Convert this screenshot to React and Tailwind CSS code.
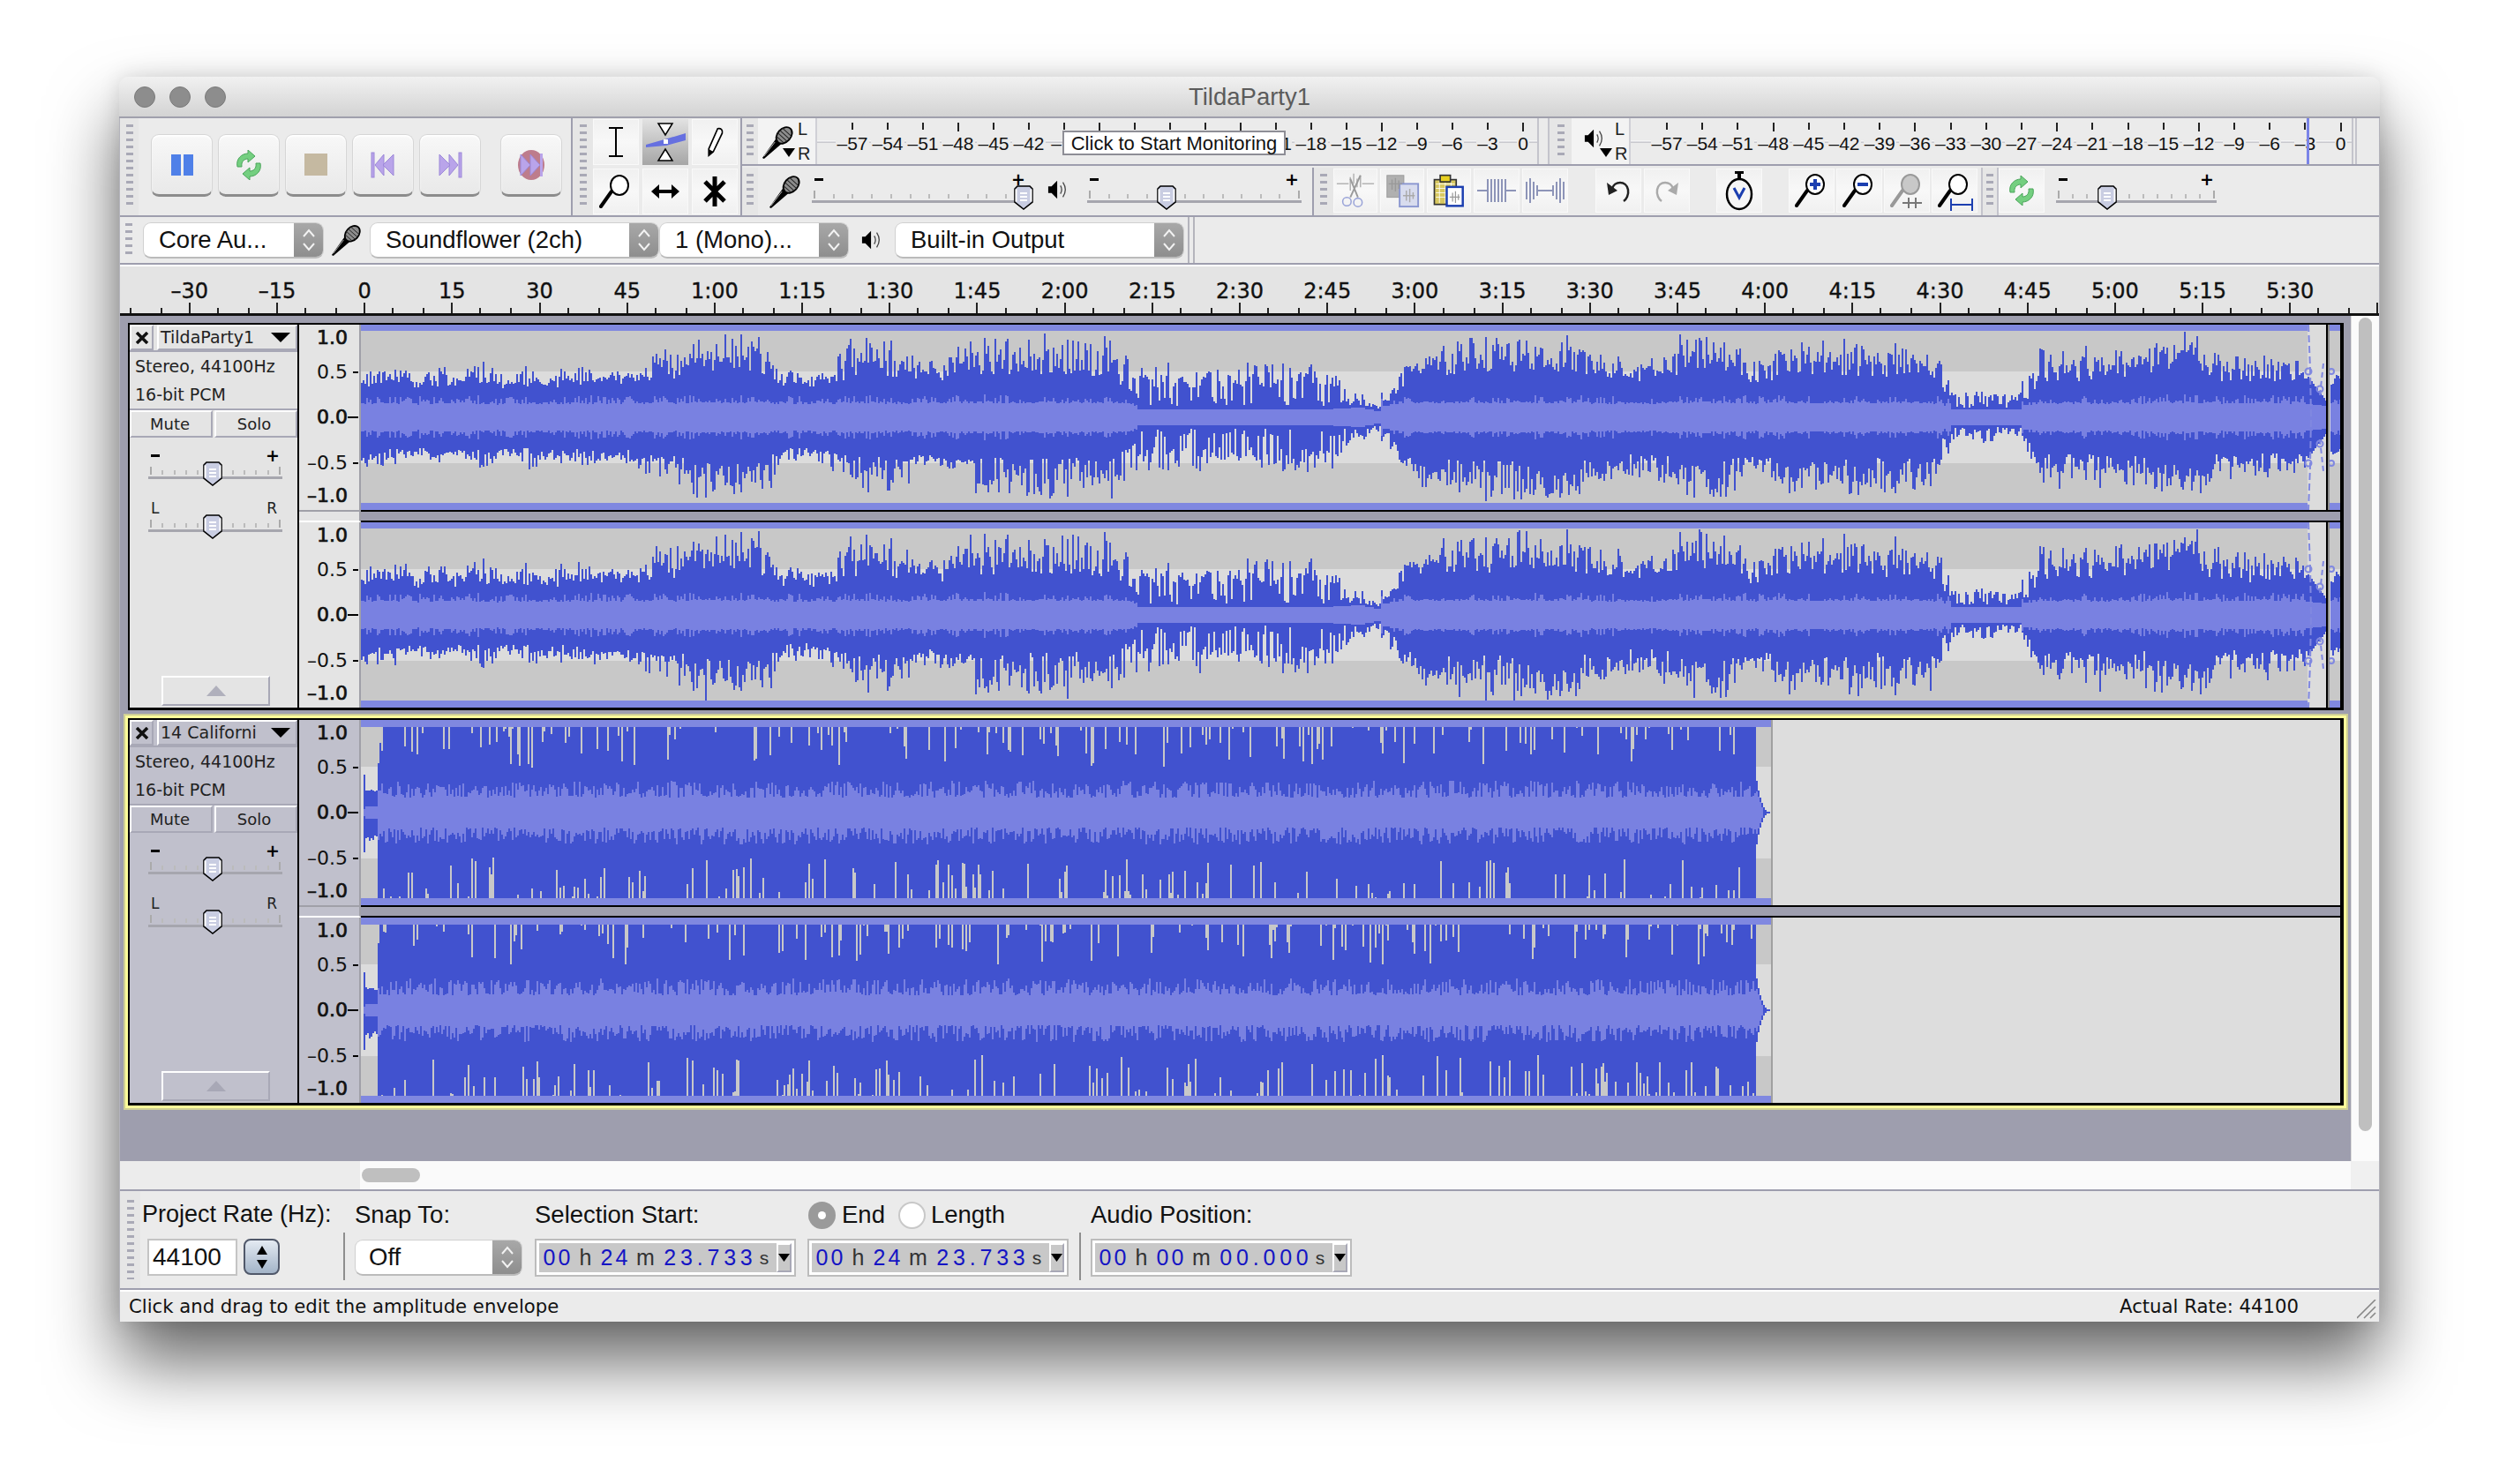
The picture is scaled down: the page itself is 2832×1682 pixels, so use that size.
import React from "react";

/* ---------- waveform data ---------- */
function mulberry(a) {
  return () => {
    a |= 0; a = (a + 0x6d2b79f5) | 0;
    let t = Math.imul(a ^ (a >>> 15), 1 | a);
    t = (t + Math.imul(t ^ (t >>> 7), 61 | t)) ^ t;
    return ((t ^ (t >>> 14)) >>> 0) / 4294967296;
  };
}
const T1 = [
  [409, 38, 60], [461, 36, 46], [490, 38, 80], [501, 37, 48], [537, 40, 68], [558, 36, 46], [592, 38, 83],
  [602, 37, 50], [645, 40, 66], [660, 40, 54], [731, 46, 78], [782, 54, 97], [875, 36, 54], [948, 48, 90],
  [1034, 44, 64], [1084, 50, 95], [1278, 13, 62, 1], [1520, 15, 28], [1556, 8, 12], [1575, 38, 54], [1600, 52, 95],
  [1680, 54, 95], [1795, 44, 76], [1890, 54, 97], [1966, 42, 68], [2015, 54, 97], [2060, 50, 90], [2200, 12, 30],
  [2300, 44, 82], [2440, 58, 97], [2500, 44, 72], [2615, 36, 40], [2636, 38, 50],
];
function seg(x) {
  let s = T1[0];
  for (const t of T1) if (x >= t[0]) s = t;
  return s;
}
function genT1() {
  const r = mulberry(11);
  const cols = [];
  let sT = 0.4, sB = 0.4;
  for (let x = 409; x < 2652; x += 2) {
    const a = seg(x - 10), c = seg(x), d = seg(x + 10);
    const f = (a[1] + c[1] + d[1]) / 3;
    const p = (a[2] + c[2] + d[2]) / 3;
    const comb = c[3];
    sT = 0.6 * sT + 0.4 * r();
    sB = 0.6 * sB + 0.4 * r();
    const one = (s) => {
      const base = f * (0.92 + r() * 0.16);
      if (comb) return r() < 0.72 ? 34 + Math.pow(r(), 1.4) * (p - 34) : base + r() * 10;
      if (r() < 0.05) return p * (0.85 + r() * 0.15);
      if (r() > 0.78) return base;
      const q = Math.min(1, s * 0.55 + r() * 0.62);
      return base + (p - base) * Math.pow(q, 1.6);
    };
    const t = one(sT);
    const b = one(sB);
    let rms = f < 20 ? Math.max(7, f * 0.72) : 11 + f * 0.09 + r() * 3;
    if (t > p * 0.8 && f >= 20) rms += r() * 8;
    cols.push({ x, t: Math.min(t, 97), b: Math.min(b, 97), rt: rms, rb: rms });
  }
  return cols;
}
function variant(cols, seed) {
  const r = mulberry(seed);
  return cols.map((c) => ({
    ...c,
    t: Math.min(97, c.t * (0.9 + r() * 0.2)),
    b: Math.min(97, c.b * (0.9 + r() * 0.2)),
  }));
}
function genT2(seed) {
  const r = mulberry(seed);
  const cols = [];
  cols.push({ x: 412, t: 43, b: 45, rt: 4, rb: 4 });
  for (let x = 414; x < 428; x += 2) {
    const a = 24 - (x - 414) * 0.1 + r() * 3;
    cols.push({ x, t: a, b: a + r() * 8, rt: 7, rb: 7 });
  }
  for (let x = 428; x < 1990; x += 2) {
    const t = r() < 0.2 ? 97 - Math.pow(r(), 1.3) * 46 : 97;
    const b = r() < 0.2 ? 97 - Math.pow(r(), 1.3) * 46 : 97;
    const rt = 17 + Math.pow(r(), 1.4) * 19;
    const rb = 17 + Math.pow(r(), 1.4) * 19;
    cols.push({ x, t, b, rt, rb });
  }
  for (let x = 1990; x < 2006; x += 2) {
    const k = (2006 - x) / 16;
    const a = Math.max(1, Math.pow(k, 2.6) * 36);
    const q = Math.max(0, (1998 - x) / 8) * 24;
    cols.push({ x, t: a, b: a, rt: q, rb: q });
  }
  return cols;
}
const pathOf = (cols, kT, kB) =>
  cols.map((c) => `M${c.x - 409} ${(105 - c[kT]).toFixed(0)}h2V${(105 + c[kB]).toFixed(0)}h-2z`).join("");

const T1A = genT1();
const T1B = variant(T1A, 5);
const T2A = genT2(21);
const T2B = genT2(22);

function Channel({ cols, kind }) {
  const dark = "#4152cf", light = "#7981e1", band = "#8088e0";
  const inPlay = cols.filter((c) => kind === 1 ? (c.x < 2615 || c.x >= 2640) : true);
  const tail = kind === 1 ? cols.filter((c) => c.x >= 2615 && c.x < 2636).map((c) => {
    const k = (c.x - 2615) / 21;
    return { ...c, t: 46 - k * 28, b: 46 - k * 28, rt: 15 - k * 2, rb: 15 - k * 2 };
  }) : [];
  return (
    <svg width="2243" height="210" viewBox="0 0 2243 210" shapeRendering="crispEdges" className="block">
      <rect width="2243" height="210" fill={kind === 1 ? "#c8c8c8" : "#dddddd"} />
      {kind === 1 ? (
        <>
          <rect y="53" width="2243" height="104" fill="#dcdcdc" />
          <rect x="2206" width="21" height="210" fill="#dcdcdc" />
          <rect width="2206" height="7" fill={band} />
          <rect y="202" width="2206" height="8" fill={band} />
          <rect x="2231" width="12" height="7" fill={band} />
          <rect x="2231" y="202" width="12" height="8" fill={band} />
        </>
      ) : (
        <>
          <rect width="1598" height="210" fill="#c8c8c8" />
          <rect y="53" width="1598" height="104" fill="#dcdcdc" />
          <rect width="1598" height="8" fill={band} />
          <rect y="202" width="1598" height="8" fill={band} />
          <rect x="1598" width="2" height="210" fill="#a0a0a0" />
        </>
      )}
      <path d={pathOf(inPlay, "t", "b")} fill={dark} />
      <path d={pathOf(tail, "t", "b")} fill={dark} />
      <path d={pathOf(inPlay, "rt", "rb")} fill={light} />
      <path d={pathOf(tail, "rt", "rb")} fill={light} />
      {kind === 1 && (
        <>
          <g fill="none" stroke={band} strokeWidth="2" shapeRendering="auto">
            <path d="M2207 0 L2209 50 L2210 105 L2209 160 L2207 210" strokeDasharray="8 4" />
            <path d="M2224 44 L2220 80 M2220 130 L2224 166" strokeDasharray="6 4" />
            <circle cx="2207" cy="53" r="3.5" />
            <circle cx="2207" cy="157" r="3.5" />
            <circle cx="2220" cy="73" r="3.5" />
            <circle cx="2220" cy="135" r="3.5" />
            <circle cx="2233" cy="53" r="3" />
            <circle cx="2233" cy="157" r="3" />
          </g>
          <rect x="2227" width="2" height="210" fill="#000" />
          <rect x="2229" width="2" height="210" fill="#8c8c8c" />
        </>
      )}
    </svg>
  );
}

/* ---------- icons ---------- */
const Mic = ({ s = 38 }) => (
  <svg width={s} height={s} viewBox="0 0 40 40">
    <path d="M1 39 L18 15 L25 21 L3 40Z" fill="#000" />
    <g transform="rotate(42 27 12)">
      <ellipse cx="27" cy="12" rx="8" ry="11" fill="#8c8c8c" stroke="#000" strokeWidth="2" />
      <path d="M20 7h14M19 11h16M19 15h16M21 19h12" stroke="#222" strokeWidth="1" />
    </g>
    <path d="M3 37 L16 20" stroke="#bbb" strokeWidth="1" />
  </svg>
);
const Spk = () => (
  <svg width="24" height="28" viewBox="0 0 26 28">
    <path d="M1 10h4l7-7v22l-7-7H1z" fill="#000" />
    <path d="M16 9q3 5 0 10M19 5q6 9 0 18" fill="none" stroke="#444" strokeWidth="1.4" />
  </svg>
);
const Loop = ({ s = 34 }) => (
  <svg width={s} height={s} viewBox="0 0 34 34">
    <g fill="#74cf80" stroke="#4aa45a" strokeWidth="1">
      <path d="M4 19 C2 10 9 4 16 4 L16 0 L24 7 L16 14 L16 10 C12 10 8 13 9 19Z" />
      <path d="M30 15 C32 24 25 30 18 30 L18 34 L10 27 L18 20 L18 24 C22 24 26 21 25 15Z" />
    </g>
  </svg>
);
const Skip = ({ dir }) => (
  <svg width="28" height="30" viewBox="0 0 28 30" className={dir === "r" ? "-scale-x-100" : ""}>
    <g fill="#b9a4ea" stroke="#9c88d8" strokeWidth="1">
      <rect x="1" y="1" width="3" height="28" />
      <path d="M5 15 L15 3 V27Z" />
      <path d="M14 15 L26 3 V27Z" />
    </g>
  </svg>
);
const Rec = () => (
  <svg width="32" height="36" viewBox="0 0 32 36">
    <ellipse cx="16" cy="18" rx="15" ry="17" fill="#bd7c8c" />
    <path d="M4 6 L15 18 L4 30Z M15 6 L26 18 L15 30Z" fill="#b9a4ea" stroke="#9c88d8" />
    <rect x="26" y="5" width="3" height="26" fill="#b9a4ea" />
  </svg>
);
const IBeam = () => (
  <svg width="20" height="36" viewBox="0 0 20 36" fill="none" stroke="#000" strokeWidth="2">
    <path d="M2 2h16M10 2v32M2 34h16" />
  </svg>
);
const Env = () => (
  <svg width="50" height="48" viewBox="0 0 50 48">
    <path d="M17 3h16l-8 13z" fill="#fff" stroke="#000" strokeWidth="1.5" />
    <path d="M17 45h16l-8-13z" fill="#fff" stroke="#000" strokeWidth="1.5" />
    <path d="M3 27 L24 21 L48 14 V22 L26 28 L3 30Z" fill="#6670e0" />
    <rect x="23" y="21" width="5" height="5" fill="#fff" />
  </svg>
);
const Pencil = () => (
  <svg width="22" height="38" viewBox="0 0 26 40">
    <path d="M17 2 C21 1 24 4 23 8 L11 33 L5 38 L5 29Z" fill="#fff" stroke="#000" strokeWidth="2" />
    <path d="M6 30 L11 33 L5 38Z" fill="#000" />
  </svg>
);
const Glass = ({ s = 38, sign, color = "#000", lens = "#fff" }) => (
  <svg width={s} height={s} viewBox="0 0 38 38">
    <path d="M2 36 L14 19" stroke={color} strokeWidth="4" strokeLinecap="round" />
    <ellipse cx="23" cy="12" rx="10" ry="11" fill={lens} stroke={color} strokeWidth="2" />
    {sign === "+" && <path d="M17 12h12M23 6v12" stroke="#1c3fb0" strokeWidth="4" />}
    {sign === "-" && <path d="M17 12h12" stroke="#1c3fb0" strokeWidth="4" />}
  </svg>
);
const HArrow = () => (
  <svg width="34" height="22" viewBox="0 0 34 22">
    <path d="M1 11 L10 3 V9 H24 V3 L33 11 L24 19 V13 H10 V19Z" fill="#000" />
  </svg>
);
const Star = () => (
  <svg width="28" height="36" viewBox="0 0 28 36" stroke="#000" strokeWidth="5">
    <path d="M14 1v34M3 7l22 22M25 7L3 29" />
  </svg>
);
const Cut = () => (
  <svg width="46" height="46" viewBox="0 0 48 48">
    <path d="M2 16h14M32 16h14M18 8v16M22 4v12M26 10v10M30 6v14" stroke="#b4b4b4" strokeWidth="1.6" fill="none" />
    <path d="M30 6 L18 32 M18 10 L27 32" stroke="#9a9a9a" strokeWidth="2" />
    <circle cx="14" cy="37" r="5" fill="none" stroke="#9aa4d8" strokeWidth="1.6" />
    <circle cx="27" cy="38" r="5" fill="none" stroke="#9aa4d8" strokeWidth="1.6" />
  </svg>
);
const Copy = () => (
  <svg width="42" height="42" viewBox="0 0 44 44">
    <rect x="4" y="4" width="20" height="26" fill="#b0b0b0" stroke="#999" />
    <rect x="19" y="14" width="22" height="27" fill="#d8dcee" stroke="#8a96d0" strokeWidth="2" />
    <path d="M23 28h14M27 22v12M31 20v16M35 24v8" stroke="#aaa" strokeWidth="1.5" />
    <path d="M6 14h16M10 9v12M14 7v16M18 10v10" stroke="#999" strokeWidth="1.5" />
  </svg>
);
const Paste = () => (
  <svg width="38" height="40" viewBox="0 0 46 46">
    <rect x="3" y="8" width="30" height="34" fill="#d8c860" stroke="#333" strokeWidth="2" />
    <path d="M5 14h26M5 20h26M5 26h26M5 32h26M10 10v30M18 10v30M26 10v30" stroke="#fff" strokeWidth="1" />
    <rect x="11" y="2" width="14" height="9" fill="#e8d020" stroke="#333" strokeWidth="2" />
    <rect x="20" y="18" width="22" height="26" fill="#fff" stroke="#1c3fb0" strokeWidth="3" />
    <path d="M24 32h14M28 26v12M32 24v16M36 28v8" stroke="#999" strokeWidth="1.5" />
  </svg>
);
const Trim = () => (
  <svg width="48" height="32" viewBox="0 0 48 32"><path d="M2 16h12M34 16h12M14 3v26M18 3v26M22 3v26M26 3v26M30 3v26M34 3v26" stroke="#8d94b8" strokeWidth="2" fill="none" /></svg>
);
const Silence = () => (
  <svg width="48" height="32" viewBox="0 0 48 32"><path d="M3 6v20M7 2v28M11 6v20M15 10v12M15 16h18M33 10v12M37 6v20M41 2v28M45 6v20" stroke="#8d94b8" strokeWidth="2" fill="none" /></svg>
);
const Undo = ({ c, flip }) => (
  <svg width="30" height="30" viewBox="0 0 30 30" className={flip ? "-scale-x-100" : ""}>
    <path d="M8 13 C10 4 24 3 26 14 C27 20 24 25 21 27" fill="none" stroke={c} strokeWidth="2.5" />
    <path d="M2 6 L4 20 L14 15Z" fill={c} />
  </svg>
);
const Watch = () => (
  <svg width="34" height="46" viewBox="0 0 34 46">
    <path d="M12 1h10v3h-3v5h-4V4h-3z" fill="#000" />
    <ellipse cx="17" cy="27" rx="14" ry="17" fill="#f6f6f6" stroke="#000" strokeWidth="2.5" />
    <path d="M11 20 L17 31 L23 20" fill="none" stroke="#1c3fb0" strokeWidth="3" />
  </svg>
);
const Chev = () => (
  <svg width="16" height="30" viewBox="0 0 16 30" fill="none" stroke="#f2f2f2" strokeWidth="2">
    <path d="M2 11 L8 4 L14 11M2 19 L8 26 L14 19" />
  </svg>
);
const Thumb = () => (
  <svg width="22" height="28" viewBox="0 0 22 28">
    <path d="M4 1h14l3 3v15l-10 8L1 19V4z" fill="#c9cde2" stroke="#000" strokeWidth="1.6" />
    <path d="M2.5 4.5v14M19.5 4.5v14" stroke="#fff" strokeWidth="2" />
    <path d="M7 9h8M7 13h8M7 17h8" stroke="#fff" strokeWidth="2" />
  </svg>
);

/* ---------- toolbar pieces ---------- */
const Grip = ({ className = "" }) => (
  <div className={`w-[8px] bg-[image:repeating-linear-gradient(180deg,#a9a9b6_0,#a9a9b6_3px,transparent_3px,transparent_8px)] ${className}`} />
);
const GripPanel = ({ w, className = "" }) => (
  <div className={`flex shrink-0 justify-center py-[7px] bg-[#e6e6e6] ${className}`} style={{ width: w }}>
    <Grip />
  </div>
);
const Transport = ({ children, className = "" }) => (
  <div className={`w-[70px] h-[71px] rounded-[9px] border border-[#d6d6d6] border-b-[3px] border-b-[#8c8c8c] bg-gradient-to-b from-[#f8f8f8] via-[#f0f0f0] to-[#e9e9e9] shadow-[inset_0_2px_2px_#ffffff] flex items-center justify-center ${className}`}>
    {children}
  </div>
);
const Tool = ({ children, on, w = "w-[52px]" }) => (
  <div className={`${w} h-[50px] flex items-center justify-center ${on ? "bg-gradient-to-b from-[#e2e2e2] to-[#a6a6a6]" : "bg-gradient-to-b from-[#f0f0f0] via-[#f8f8f8] to-[#f0f0f0] shadow-[inset_0_0_0_1px_#f9f9f9]"}`}>
    {children}
  </div>
);
const ToolBig = ({ children, on }) => (
  <div className={`w-[52px] h-[52px] flex items-center justify-center ${on ? "bg-gradient-to-b from-[#e2e2e2] to-[#a6a6a6]" : "bg-gradient-to-b from-[#f0f0f0] via-[#f8f8f8] to-[#f0f0f0] shadow-[inset_0_0_0_1px_#f9f9f9]"}`}>
    {children}
  </div>
);
const Select = ({ w, stepper = 33, text, textClass = "pl-[17px]" }) => (
  <div className="flex h-[41px] shrink-0 rounded-[9px] overflow-hidden border border-[#d0d0d0] border-b-[2px] border-b-[#bbbbbb] bg-white" style={{ width: w }}>
    <div className={`flex-1 flex items-center text-[27.5px] text-[#111] whitespace-nowrap ${textClass}`}>{text}</div>
    <div className="flex items-center justify-center bg-gradient-to-b from-[#a8a8a8] to-[#8e8e8e]" style={{ width: stepper }}>
      <Chev />
    </div>
  </div>
);
const Slider = ({ w, pos, labels, h = 53 }) => (
  <div className="relative shrink-0" style={{ width: w, height: h }}>
    <div className="flex justify-between h-[26px] items-center px-[3px] text-[#000] font-['DejaVu_Sans',sans-serif]">
      {labels ? (
        <>
          <span className="text-[17px] text-[#222]">{labels[0]}</span>
          <span className="text-[17px] text-[#222] mr-[3px]">{labels[1]}</span>
        </>
      ) : (
        <>
          <span className="block w-[10px] h-[3px] bg-black" />
          <span className="text-[19px] font-bold leading-none">+</span>
        </>
      )}
    </div>
    <div className="flex justify-between items-end h-[9px] px-[2px]">
      {Array.from({ length: 12 }).map((_, i) => (
        <span key={i} className={`w-[2px] ${i === 0 || i === 11 ? "h-[9px] bg-[#aaa]" : "h-[5px] bg-[#bbb]"}`} />
      ))}
    </div>
    <div className="h-[3px] mt-[2px] bg-[#a6a6ae]" />
    <div className="absolute top-[20px]" style={{ left: pos - 11 }}><Thumb /></div>
  </div>
);
const METER = [-57, -54, -51, -48, -45, -42, -39, -36, -33, -30, -27, -24, -21, -18, -15, -12, -9, -6, -3, 0];
const MeterLabel = ({ n, covered }) => {
  if (covered && n === -39) return <span className="mt-[3px] text-[#111] -translate-x-[9px]">–</span>;
  if (covered && n === -21) return <span className="mt-[3px] bg-[#ebebeb] translate-x-[12px]">1</span>;
  if (covered && n > -39 && n < -21) return null;
  return <span className="bg-[#ebebeb] px-[1px] mt-[3px] whitespace-nowrap">{n === 0 ? "0" : `–${-n}`}</span>;
};
const Meter = ({ w, pl, cell, covered, children }) => (
  <div className="relative h-full shrink-0 border-l-2 border-[#d0d0d6]" style={{ width: w }}>
    <div className="absolute left-0 right-0 top-[25px] h-[3px] bg-gradient-to-b from-[#ffffff] to-[#bdbdc4]" />
    <div className="relative flex font-['Liberation_Sans',sans-serif] text-[21px] text-[#111] leading-none" style={{ paddingLeft: pl }}>
      {METER.map((n, i) => (
        <div key={n} className="flex flex-col items-center shrink-0" style={{ width: cell }}>
          <div className="h-[15px] pt-[5px] flex items-start">
            <span className={`block w-[2px] bg-[#222] ${i % 4 === 3 ? "h-[10px]" : "h-[8px]"}`} />
          </div>
          <MeterLabel n={n} covered={covered} />
        </div>
      ))}
    </div>
    {children}
  </div>
);

/* ---------- track ---------- */
const bevel = "border-2 border-t-white border-l-white border-r-[#a8a8b6] border-b-[#a8a8b6]";
function TrackPanel({ name, selected }) {
  return (
    <div className={`relative w-[190px] shrink-0 flex flex-col text-[19px] text-[#222] leading-none font-['DejaVu_Sans',sans-serif] ${selected ? "bg-[#c0c0cc]" : "bg-[#e4e4e4]"}`}>
      <div className="flex h-[29px] gap-[4px]">
        <div className={`w-[27px] flex items-center justify-center ${bevel}`}>
          <svg width="16" height="14" viewBox="0 0 16 14" stroke="#111" strokeWidth="3.5"><path d="M2 1l12 12M14 1L2 13" /></svg>
        </div>
        <div className={`flex-1 flex items-center justify-between pl-[2px] pr-[6px] ${bevel}`}>
          <span className="whitespace-nowrap">{name}</span>
          <svg width="22" height="11" viewBox="0 0 22 11"><path d="M0 0h22L11 11z" fill="#000" /></svg>
        </div>
      </div>
      <div className="h-[68px] border-y-2 border-y-[#a8a8b6] pl-[6px] flex flex-col">
        <div className="h-[32px] flex items-center whitespace-nowrap">Stereo, 44100Hz</div>
        <div className="h-[32px] flex items-center whitespace-nowrap">16-bit PCM</div>
      </div>
      <div className="flex h-[31px] gap-[2px] text-[18px]">
        <div className={`w-[94px] flex items-center justify-center pr-[3px] ${bevel}`}>Mute</div>
        <div className={`flex-1 flex items-center justify-center pr-[4px] ${bevel}`}>Solo</div>
      </div>
      <div className="ml-[21px] mt-[7px]"><Slider w={152} pos={73} h={50} /></div>
      <div className="ml-[21px] mt-[10px]"><Slider w={152} pos={73} h={50} labels={["L", "R"]} /></div>
      <div className={`absolute left-[36px] bottom-[2px] w-[123px] h-[34px] flex items-center justify-center ${bevel}`}>
        <svg width="22" height="12" viewBox="0 0 22 12"><path d="M11 0l11 12H0z" fill={selected ? "#a8a8b6" : "#b0b0bc"} /></svg>
      </div>
    </div>
  );
}
const Lab = ({ v, tick, mt, heavy }) => (
  <div className="flex h-[30px] items-center justify-end" style={{ marginTop: mt }}>
    <span className={heavy ? "[-webkit-text-stroke:0.7px_#111]" : ""}>{v}</span>
    <span className="w-[12px] flex justify-end">
      {tick === 2 && <span className="block w-[12px] h-[2px] bg-black" />}
      {tick === 1 && <span className="block w-[6px] h-[2px] bg-black" />}
    </span>
  </div>
);
function VRuler({ selected }) {
  return (
    <div className={`h-[210px] pr-[1px] flex flex-col text-[22px] leading-none text-[#111] font-['DejaVu_Sans',sans-serif] border-r-2 border-[#a0a0a8] ${selected ? "bg-[#c0c0cc]" : "bg-[#e4e4e4]"}`}>
      <Lab v="1.0" mt={0} heavy />
      <Lab v="0.5" tick={1} mt={9} />
      <Lab v="0.0" tick={2} mt={21} heavy />
      <Lab v="–0.5" tick={1} mt={22} />
      <Lab v="–1.0" mt={7} heavy />
    </div>
  );
}
function Track({ name, a, b, kind, selected }) {
  return (
    <div className="flex h-[439px] w-[2511px] border-t-2 border-l-2 border-b-[3px] border-r-4 border-black">
      <TrackPanel name={name} selected={selected} />
      <div className="w-[2px] bg-black" />
      <div className="w-[70px] shrink-0 flex flex-col">
        <VRuler selected={selected} />
        <div className={`h-[14px] border-t-2 border-t-[#a0a0a8] border-b-2 border-b-white border-r-2 border-r-[#a0a0a8] ${selected ? "bg-[#c0c0cc]" : "bg-[#e4e4e4]"}`} />
        <VRuler selected={selected} />
      </div>
      <div className="flex flex-col w-[2243px]">
        <Channel cols={a} kind={kind} />
        <div className="h-[14px] border-y-2 border-black bg-[#9e9eae]" />
        <Channel cols={b} kind={kind} />
      </div>
    </div>
  );
}

/* ---------- time field ---------- */
const Digits = ({ s, w = 17 }) => (
  <span className="flex text-[#1414c4]">
    {s.split("").map((c, i) => (
      <span key={i} className="text-center" style={{ width: c === "." ? 12 : w }}>{c}</span>
    ))}
  </span>
);
const TimeField = ({ h, m, sec }) => (
  <div className="w-[296px] h-[43px] shrink-0 border-2 border-[#bcbcbc] bg-white p-[3px]">
    <div className="flex h-full items-center bg-[#c8c8c8] pl-[3px] text-[25px] font-['Liberation_Sans',sans-serif] text-[#333] leading-none">
      <Digits s={h} />
      <span className="w-[31px] text-center">h</span>
      <Digits s={m} />
      <span className="w-[37px] text-center">m</span>
      <Digits s={sec} w={18.6} />
      <span className="w-[22px] text-center text-[21px]">s</span>
      <div className="ml-auto w-[17px] h-full flex items-center justify-center border-2 border-t-white border-l-white border-r-[#a8a8b6] border-b-[#a8a8b6]">
        <svg width="13" height="9" viewBox="0 0 13 9"><path d="M0 0h13L6.5 9z" fill="#000" /></svg>
      </div>
    </div>
  </div>
);

const RUL = [];
for (let t = -45; t <= 345; t += 15) {
  const abs = Math.abs(t);
  let label = "";
  if (t >= -30 && t <= 330) {
    if (abs < 60) label = t < 0 ? `–${abs}` : `${abs}`;
    else label = `${Math.floor(abs / 60)}:${String(abs % 60).padStart(2, "0")}`;
  }
  RUL.push(label);
}

export default function App() {
  return (
    <div className="w-[2832px] h-[1682px] bg-white overflow-hidden pl-[135px] pt-[87px] font-['Liberation_Sans',Arial,sans-serif]">
      <div className="w-[2562px] h-[1411px] flex flex-col rounded-t-[10px] shadow-[0_46px_80px_rgba(0,0,0,0.6),0_0_24px_rgba(0,0,0,0.12)] bg-[#ebebeb] overflow-hidden">
        {/* title bar */}
        <div className="relative h-[47px] shrink-0 flex items-center justify-center bg-gradient-to-b from-[#f1f1f1] to-[#d3d3d3] text-[27.5px] text-[#5b5b5b] border-b-2 border-[#a0a0ac]">
          <div className="absolute left-[17px] top-[11px] flex gap-[16px]">
            <span className="w-[24px] h-[24px] rounded-full bg-[#8d8d8d] border border-[#7a7a7a]" />
            <span className="w-[24px] h-[24px] rounded-full bg-[#8d8d8d] border border-[#7a7a7a]" />
            <span className="w-[24px] h-[24px] rounded-full bg-[#8d8d8d] border border-[#7a7a7a]" />
          </div>
          TildaParty1
        </div>

        <div className="flex-1 flex flex-col border-x border-[#b4b4bc] min-h-0">
          {/* toolbar row A */}
          <div className="flex h-[112px] shrink-0 border-b-2 border-[#9e9eae]">
            <div className="w-[513px] shrink-0 flex border-r-2 border-[#9e9eae]">
              <GripPanel w={21} />
              <div className="flex gap-[6px] pl-[14px] pt-[18px]">
                <Transport>
                  <div className="flex gap-[3px]"><span className="w-[11px] h-[24px] bg-[#4f80e8]" /><span className="w-[11px] h-[24px] bg-[#4f80e8]" /></div>
                </Transport>
                <Transport><Loop /></Transport>
                <Transport><span className="w-[26px] h-[25px] bg-[#c5b9a1]" /></Transport>
                <Transport><Skip /></Transport>
                <Transport><Skip dir="r" /></Transport>
                <Transport className="ml-[16px]"><Rec /></Transport>
              </div>
            </div>
            <div className="w-[192px] shrink-0 flex border-r-2 border-[#9e9eae]">
              <GripPanel w={23} />
              <div className="grid grid-cols-[52px_52px_52px] grid-rows-[52px_52px] gap-[4px] pt-[1px]">
                <ToolBig><IBeam /></ToolBig>
                <ToolBig on><Env /></ToolBig>
                <ToolBig><Pencil /></ToolBig>
                <ToolBig><Glass /></ToolBig>
                <ToolBig><HArrow /></ToolBig>
                <ToolBig><Star /></ToolBig>
              </div>
            </div>
            <div className="flex-1 flex flex-col min-w-0">
              {/* meters */}
              <div className="flex h-[54px] shrink-0 border-b-2 border-[#9e9eae]">
                <GripPanel w={18} />
                <div className="w-[65px] shrink-0 flex bg-[#f3f3f3] relative">
                  <div className="pt-[8px] pl-[4px]"><Mic /></div>
                  <div className="absolute left-[45px] top-[2px] flex flex-col text-[20px] text-[#222] leading-none gap-[8px]">
                    <span>L</span><span>R</span>
                  </div>
                  <svg className="absolute left-[28px] top-[34px]" width="14" height="10" viewBox="0 0 14 10"><path d="M0 0h14L7 10z" fill="#000" /></svg>
                </div>
                <Meter w={818} pl={20} cell={40} covered>
                  <div className="absolute left-[278px] top-[14px] w-[253px] h-[28px] border-2 border-[#8e8e96] bg-white flex items-center justify-center text-[22px] text-[#111] whitespace-nowrap">Click to Start Monitoring</div>
                </Meter>
                <div className="w-[14px] shrink-0 border-x-2 border-[#c4c4cc]" />
                <GripPanel w={25} />
                <div className="w-[65px] shrink-0 flex bg-[#f3f3f3] relative">
                  <div className="pt-[9px] pl-[14px]"><Spk /></div>
                  <div className="absolute left-[49px] top-[2px] flex flex-col text-[20px] text-[#222] leading-none gap-[8px]">
                    <span>L</span><span>R</span>
                  </div>
                  <svg className="absolute left-[32px] top-[34px]" width="14" height="10" viewBox="0 0 14 10"><path d="M0 0h14L7 10z" fill="#000" /></svg>
                </div>
                <Meter w={819} pl={21} cell={40.2}>
                  <div className="absolute left-[766px] top-0 w-[3px] h-full bg-[#7a84e8]" />
                </Meter>
                <div className="w-[6px] shrink-0 border-x-2 border-[#c4c4cc]" />
              </div>
              {/* mixer + edit */}
              <div className="flex flex-1 min-h-0 items-stretch pt-[2px]">
                <GripPanel w={18} />
                <div className="w-[61px] shrink-0 flex items-center justify-center"><Mic /></div>
                <div className="shrink-0"><Slider w={245} pos={240} /></div>
                <div className="w-[67px] shrink-0 flex items-center justify-center pb-[4px]"><Spk /></div>
                <div className="shrink-0"><Slider w={243} pos={90} /></div>
                <div className="ml-[12px] shrink-0 border-l-2 border-[#9e9eae] w-[24px] flex justify-center py-[7px] bg-[#e6e6e6]"><Grip /></div>
                <div className="flex gap-[3px] shrink-0 pt-[1px]">
                  <Tool w="w-[50px]"><Cut /></Tool>
                  <Tool w="w-[50px]"><Copy /></Tool>
                  <Tool w="w-[50px]"><Paste /></Tool>
                  <Tool><Trim /></Tool>
                  <Tool><Silence /></Tool>
                </div>
                <div className="flex gap-[3px] shrink-0 pt-[1px] ml-[31px]">
                  <Tool><Undo c="#222" /></Tool>
                  <Tool><Undo c="#aaa" flip /></Tool>
                </div>
                <div className="shrink-0 pt-[1px] ml-[30px]"><Tool><Watch /></Tool></div>
                <div className="flex gap-[2px] shrink-0 pt-[1px] ml-[30px]">
                  <Tool><Glass sign="+" /></Tool>
                  <Tool><Glass sign="-" /></Tool>
                  <Tool>
                    <div className="relative">
                      <Glass color="#999" lens="#c8c8c8" />
                      <svg className="absolute left-[14px] top-[26px]" width="22" height="14" viewBox="0 0 22 14" stroke="#777" strokeWidth="2"><path d="M0 7h22M7 1v12M15 1v12" /></svg>
                    </div>
                  </Tool>
                  <Tool>
                    <div className="relative">
                      <Glass />
                      <svg className="absolute left-[14px] top-[28px]" width="26" height="14" viewBox="0 0 26 14" stroke="#1c3fb0" strokeWidth="2"><path d="M1 0v14M25 0v14M1 7h24" /></svg>
                    </div>
                  </Tool>
                </div>
                <div className="ml-[4px] shrink-0 border-x-2 border-[#c4c4cc] w-[20px] flex justify-center py-[7px] bg-[#e6e6e6]"><Grip /></div>
                <div className="shrink-0 pt-[1px]"><Tool><Loop /></Tool></div>
                <div className="ml-[13px] shrink-0"><Slider w={182} pos={58} /></div>
              </div>
            </div>
          </div>

          {/* device row */}
          <div className="flex h-[54px] shrink-0 border-b-2 border-[#9e9eae] items-stretch">
            <GripPanel w={20} className="!bg-transparent" />
            <div className="flex items-center pl-[6px]">
              <Select w={205} text="Core Au..." stepper={33} />
              <div className="w-[52px] flex justify-center"><Mic s={36} /></div>
              <Select w={328} text="Soundflower (2ch)" />
              <Select w={215} text="1 (Mono)..." />
              <div className="w-[52px] flex justify-center"><Spk /></div>
              <Select w={328} text="Built-in Output" />
            </div>
            <div className="ml-[4px] w-[8px] border-x-2 border-[#b4b4bc]" />
          </div>

          {/* time ruler */}
          <div className="h-[58px] shrink-0 bg-[#e4e4e4] border-t-2 border-white border-b-[3px] border-b-[#111] overflow-hidden font-['DejaVu_Sans',sans-serif] text-[24px] text-[#111] leading-none [-webkit-text-stroke:0.35px_#111]">
            <div className="flex ml-[-70px]">
              {RUL.map((l, i) => (
                <div key={i} className="w-[99.2px] shrink-0 flex flex-col items-center">
                  <div className="h-[40px] flex items-end whitespace-nowrap">{l || "\u00a0"}</div>
                  <div className="w-full h-[13px] flex justify-between items-end px-[16.5px]">
                    <span className="w-[2px] h-[6px] bg-[#222]" />
                    <span className="w-[2px] h-[12px] bg-[#222]" />
                    <span className="w-[2px] h-[6px] bg-[#222]" />
                  </div>
                </div>
              ))}
            </div>
          </div>

          {/* tracks + scrollbar */}
          <div className="flex h-[958px] shrink-0">
            <div className="w-[2528px] shrink-0 bg-[#9e9eae] pt-[3px] pl-[4px]">
              <div className="w-[2521px] border-[5px] border-b-4 border-transparent">
                <Track name="TildaParty1" a={T1A} b={T1B} kind={1} />
              </div>
              <div className="w-[2521px] border-2 border-[#cfcf96]">
                <div className="border-[3px] border-[#fbfb9a]">
                  <Track name="14 Californi" a={T2A} b={T2B} kind={2} selected />
                </div>
              </div>
            </div>
            <div className="flex-1 bg-[#fbfbfb] px-[8px] pt-[2px] border-l border-[#dcdcdc]">
              <div className="h-[922px] rounded-full bg-[#bfbfbf]" />
            </div>
          </div>
          <div className="flex h-[34px] shrink-0 border-b-2 border-[#9e9eae]">
            <div className="w-[272px] bg-[#ececec]" />
            <div className="w-[2256px] bg-[#fafafa] pl-[2px] pt-[8px]">
              <div className="w-[66px] h-[16px] rounded-full bg-[#bfbfbf]" />
            </div>
            <div className="flex-1 bg-[#f0f0f0]" />
          </div>

          {/* selection bar */}
          <div className="flex h-[112px] shrink-0 border-b-2 border-[#9e9eae] text-[27.5px] text-[#111] leading-none">
            <GripPanel w={23} className="!py-[10px]" />
            <div className="w-[230px] shrink-0 pt-[13px] pl-[2px]">
              <div className="h-[41px] whitespace-nowrap text-[27px]">Project Rate (Hz):</div>
              <div className="flex pl-[6px] gap-[7px]">
                <div className="w-[102px] h-[42px] border-2 border-[#c4c4c4] bg-white flex items-center pl-[4px] text-[28px]">44100</div>
                <div className="w-[41px] h-[41px] rounded-[8px] border-2 border-[#50586a] bg-gradient-to-b from-[#e4eaf2] to-[#a3b4c8] flex flex-col items-center justify-center gap-[6px]">
                  <svg width="12" height="10" viewBox="0 0 12 10"><path d="M6 0l6 10H0z" fill="#000" /></svg>
                  <svg width="12" height="10" viewBox="0 0 12 10"><path d="M0 0h12L6 10z" fill="#000" /></svg>
                </div>
              </div>
            </div>
            <div className="w-[2px] h-[54px] mt-[47px] bg-[#8e8e8e] shrink-0" />
            <div className="w-[215px] shrink-0 pt-[13px] pl-[11px]">
              <div className="h-[42px] whitespace-nowrap">Snap To:</div>
              <Select w={190} text="Off" textClass="pl-[15px]" />
            </div>
            <div className="w-[309px] shrink-0 pt-[13px]">
              <div className="h-[41px] whitespace-nowrap">Selection Start:</div>
              <TimeField h="00" m="24" sec="23.733" />
            </div>
            <div className="w-[308px] shrink-0 pt-[13px]">
              <div className="h-[41px] flex items-start whitespace-nowrap">
                <span className="w-[31px] h-[31px] rounded-full bg-[#9a9a9a] flex items-center justify-center mt-[-1px] ml-[1px]"><span className="w-[9px] h-[9px] rounded-full bg-white" /></span>
                <span className="ml-[7px]">End</span>
                <span className="w-[31px] h-[31px] rounded-full bg-white border-2 border-[#c8c8c8] mt-[-1px] ml-[15px]" />
                <span className="ml-[6px]">Length</span>
              </div>
              <TimeField h="00" m="24" sec="23.733" />
            </div>
            <div className="w-[2px] h-[54px] mt-[47px] bg-[#8e8e8e] shrink-0" />
            <div className="pl-[11px] pt-[13px]">
              <div className="h-[41px] whitespace-nowrap">Audio Position:</div>
              <TimeField h="00" m="00" sec="00.000" />
            </div>
          </div>

          {/* status */}
          <div className="relative flex-1 flex items-center justify-between border-t-2 border-white bg-[#ebebeb] pl-[10px] pr-[91px] font-['DejaVu_Sans',sans-serif] text-[21.2px] text-[#111] leading-none">
            <span className="whitespace-nowrap">Click and drag to edit the amplitude envelope</span>
            <span className="whitespace-nowrap">Actual Rate: 44100</span>
            <svg className="absolute right-[3px] bottom-[3px]" width="22" height="22" viewBox="0 0 22 22" stroke="#888" strokeWidth="1.6"><path d="M0 21L21 0M8 21L21 8M15 21l6-6" /></svg>
          </div>
        </div>
      </div>
    </div>
  );
}
